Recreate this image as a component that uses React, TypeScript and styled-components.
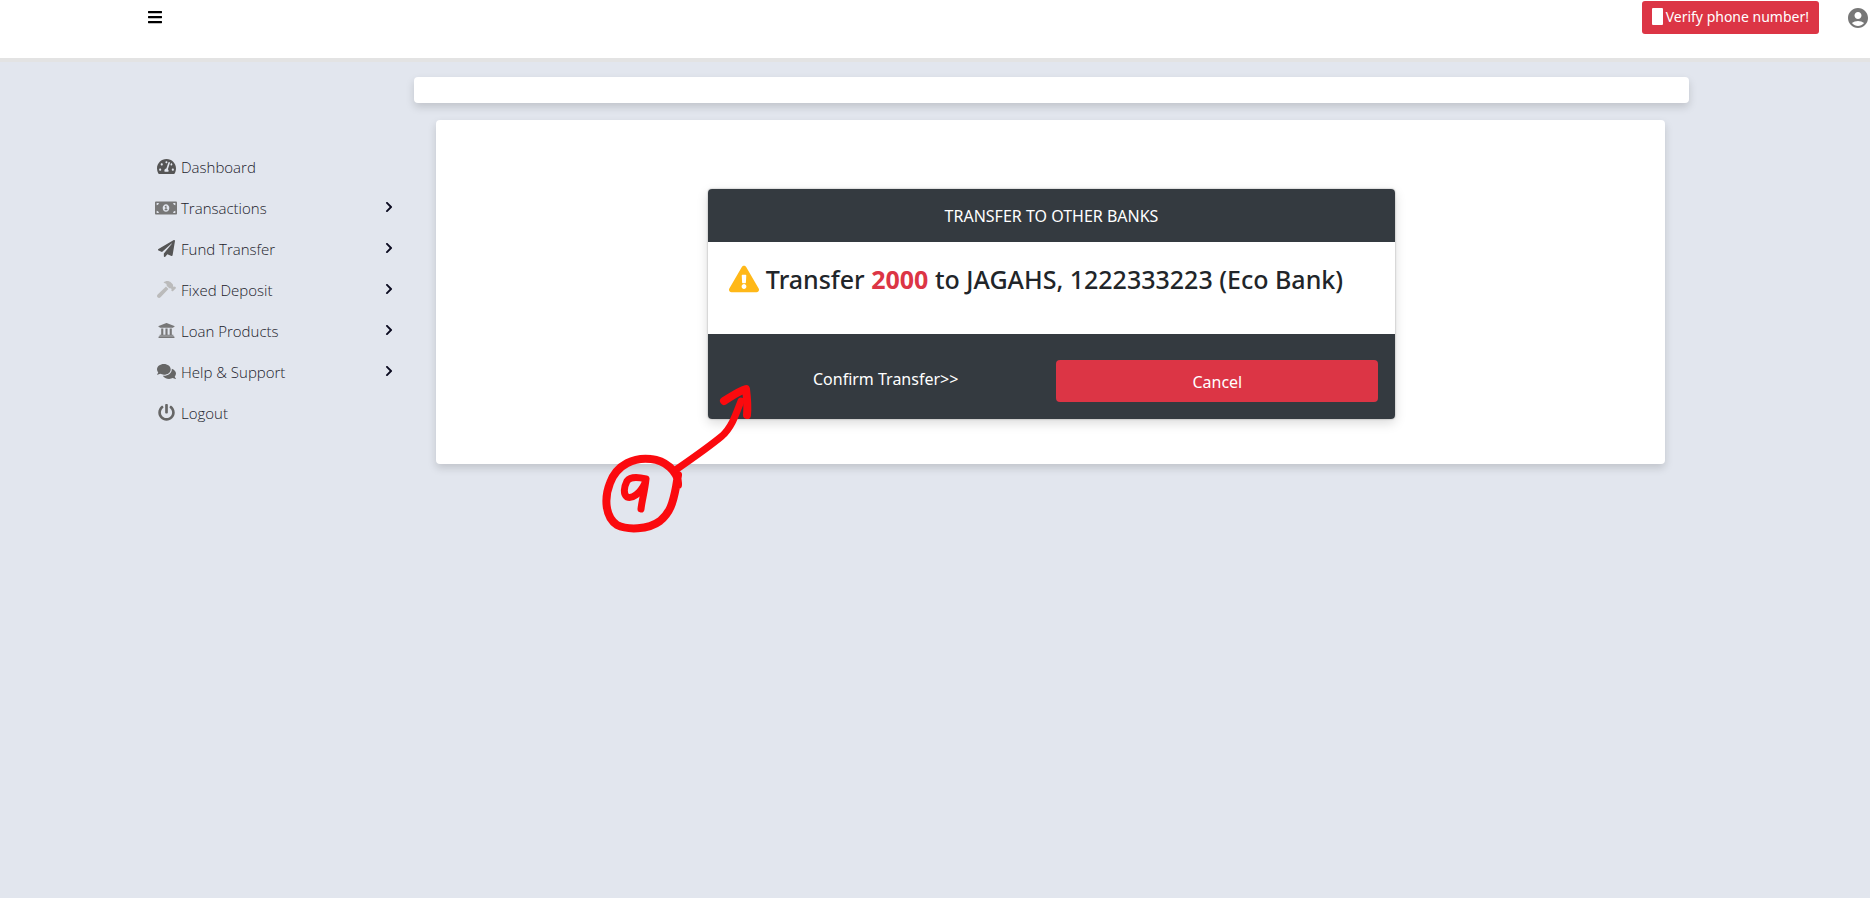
import React from 'react';
import styled, { createGlobalStyle } from 'styled-components';
import type { IconType } from 'react-icons';
import { FaBars, FaTachometerAlt, FaMoneyBillAlt, FaPaperPlane, FaHammer, FaUniversity, FaComments, FaPowerOff, FaChevronRight, FaExclamationTriangle } from 'react-icons/fa';
import { MdAccountCircle } from 'react-icons/md';

const GlobalStyle = createGlobalStyle`
  * { box-sizing: border-box; }
  body {
    margin: 0;
    background: #e2e6ee;
    color: #212529;
    font: 16px/24px "Noto Sans", "Open Sans", sans-serif;
  }
  button { font: inherit; cursor: pointer; }
`;

const Header = styled.header`
  display: flex;
  justify-content: space-between;
  align-items: flex-start;
  height: 62px;
  padding-left: 147px;
  background: #fff;
  border-bottom: 4px solid #e3e3e3;
`;

const MenuButton = styled.button`
  display: flex;
  margin-top: 9px;
  padding: 0;
  border: 0;
  background: none;
  color: #000;
  font-size: 16px;
`;

const HeaderActions = styled.div`
  display: flex;
  align-items: flex-start;
  gap: 27px;
`;

const VerifyButton = styled.button`
  display: flex;
  align-items: center;
  gap: 3px;
  height: 33px;
  margin-top: 1px;
  padding: 0 10px 2px;
  border: 0;
  border-radius: 3px;
  background: #dc3545;
  color: #fff;
  font-size: 14px;
`;

const PhoneMark = styled.span`
  width: 11px;
  height: 17px;
  border-radius: 1px;
  background: #fff;
`;

const AccountButton = styled.button`
  display: flex;
  width: 24px;
  margin-top: 5px;
  padding: 0;
  border: 0;
  background: none;
  color: #777;
  font-size: 26px;
  overflow: hidden;
`;

const Page = styled.div`
  display: flex;
  gap: 19px;
  padding: 15px 181px 48px 155px;
`;

const Sidebar = styled.nav`
  flex: 0 0 240px;
  padding-top: 69px;
`;

const NavList = styled.ul`
  display: grid;
  grid-auto-rows: 41px;
  margin: 0;
  padding: 0;
  list-style: none;
`;

const NavLink = styled.a`
  display: flex;
  align-items: center;
  height: 41px;
  color: #1b1b2b;
  font-family: "Open Sans", "Noto Sans", sans-serif;
  font-size: 15px;
  font-weight: 300;
  text-decoration: none;
`;

const NavIcon = styled.span<{ $color: string; $size: number }>`
  display: flex;
  justify-content: center;
  width: 22px;
  margin-right: 4px;
  color: ${(p) => p.$color};
  font-size: ${(p) => p.$size}px;
`;

const Chevron = styled(FaChevronRight)`
  margin: 0 0 2px auto;
  color: #0b0b20;
  font-size: 12px;
`;

const Main = styled.main`
  flex: 1;
  min-width: 0;
`;

const Notice = styled.div`
  height: 26px;
  border-radius: 4px;
  background: #fff;
  box-shadow: 0 4px 8px rgba(0, 0, 0, 0.15);
`;

const Panel = styled.section`
  display: flex;
  justify-content: center;
  margin: 17px 24px 0 22px;
  padding: 69px 21px 45px 23px;
  border-radius: 4px;
  background: #fff;
  box-shadow: 0 4px 8px rgba(0, 0, 0, 0.15);
`;

const Dialog = styled.div`
  width: 58%;
  border-radius: 4px;
  box-shadow: 0 0 2px rgba(0, 0, 0, 0.35), 0 4px 12px rgba(0, 0, 0, 0.15);
`;

const DialogHeader = styled.div`
  padding: 15px 20px 14px;
  border-radius: 4px 4px 0 0;
  background: #343a40;
  color: #fff;
  text-align: center;
`;

const DialogBody = styled.div`
  padding: 21px 21px 39px;
`;

const Question = styled.h4`
  display: flex;
  align-items: center;
  gap: 7px;
  margin: 0;
  font-size: 25px;
  line-height: 32px;
  font-weight: 500;
`;

const Warning = styled(FaExclamationTriangle)`
  color: #ffb818;
  font-size: 30px;
`;

const Amount = styled.b`
  color: #dc3545;
`;

const DialogFooter = styled.div`
  display: grid;
  grid-template-columns: 1fr 1fr;
  gap: 10px;
  padding: 26px 17px 17px;
  border-radius: 0 0 4px 4px;
  background: #343a40;
`;

const ActionButton = styled.button<{ $danger?: boolean }>`
  height: ${(p) => (p.$danger ? 42 : 36)}px;
  padding: 2px 12px 0;
  border: 0;
  border-radius: 4px;
  background: ${(p) => (p.$danger ? '#dc3545' : 'transparent')};
  color: #fff;
`;

const Annotation = styled.svg`
  position: absolute;
  left: 600px;
  top: 380px;
  pointer-events: none;
`;

type Item = { label: string; icon: IconType; color: string; size: number; nested?: boolean };

const items: Item[] = [
  { label: 'Dashboard', icon: FaTachometerAlt, color: '#555', size: 19 },
  { label: 'Transactions', icon: FaMoneyBillAlt, color: '#777', size: 22, nested: true },
  { label: 'Fund Transfer', icon: FaPaperPlane, color: '#555', size: 17, nested: true },
  { label: 'Fixed Deposit', icon: FaHammer, color: '#bbb', size: 19, nested: true },
  { label: 'Loan Products', icon: FaUniversity, color: '#777', size: 17, nested: true },
  { label: 'Help & Support', icon: FaComments, color: '#666', size: 19, nested: true },
  { label: 'Logout', icon: FaPowerOff, color: '#666', size: 17 },
];

export default function App() {
  return (
    <>
      <GlobalStyle />
      <Header>
        <MenuButton aria-label="Toggle menu"><FaBars /></MenuButton>
        <HeaderActions>
          <VerifyButton><PhoneMark />Verify phone number!</VerifyButton>
          <AccountButton aria-label="Account"><MdAccountCircle /></AccountButton>
        </HeaderActions>
      </Header>
      <Page>
        <Sidebar>
          <NavList>
            {items.map(({ label, icon: Icon, color, size, nested }) => (
              <li key={label}>
                <NavLink href="#">
                  <NavIcon $color={color} $size={size}><Icon /></NavIcon>
                  {label}
                  {nested && <Chevron />}
                </NavLink>
              </li>
            ))}
          </NavList>
        </Sidebar>
        <Main>
          <Notice />
          <Panel>
            <Dialog>
              <DialogHeader>TRANSFER TO OTHER BANKS</DialogHeader>
              <DialogBody>
                <Question>
                  <Warning />
                  <span>Transfer <Amount>2000</Amount> to JAGAHS, 1222333223 (Eco Bank)</span>
                </Question>
              </DialogBody>
              <DialogFooter>
                <ActionButton>Confirm Transfer&gt;&gt;</ActionButton>
                <ActionButton $danger>Cancel</ActionButton>
              </DialogFooter>
            </Dialog>
          </Panel>
        </Main>
      </Page>
      <Annotation width="160" height="155" viewBox="0 0 160 155" fill="none" stroke="#fb0a0e" strokeWidth="8" strokeLinecap="round" strokeLinejoin="round" aria-hidden="true">
        <path d="M78 105C79 91 64 80 51 79C35 77 17 84 10 103C4 118 5 137 17 145C27 150 48 150 60 141C70 133 73 123 76 107L78 95" />
        <path d="M77 89C90 80 110 66 122 56C132 47 136 34 141 21" strokeWidth="7" />
        <path d="M124 21C132 16 139 11 146 9C147 17 148 25 147 35" />
        <path d="M46 99C38 97 30 97 27 101C24 107 23 114 27 117C32 119 40 114 45 103M46 99C45 110 42 120 41 129" strokeWidth="7" />
      </Annotation>
    </>
  );
}
